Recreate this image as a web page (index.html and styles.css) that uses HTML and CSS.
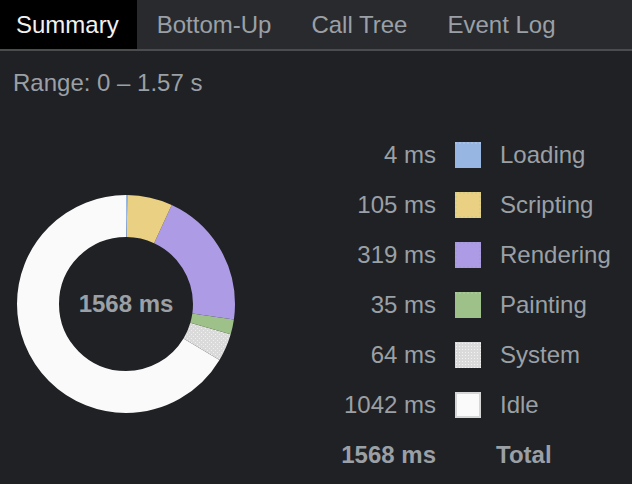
FILE: index.html
```html
<!DOCTYPE html>
<html>
<head>
<meta charset="utf-8">
<link rel="stylesheet" href="styles.css">
</head>
<body>
<div class="tabs">
  <div class="tab active">Summary</div>
  <div class="tab">Bottom-Up</div>
  <div class="tab">Call Tree</div>
  <div class="tab">Event Log</div>
</div>
<div class="range">Range: 0 – 1.57 s</div>
<div class="chart">
  <div class="donut">
    <svg width="218" height="218" viewBox="0 0 218 218">
      <defs>
        <pattern id="dots" width="4" height="4" patternUnits="userSpaceOnUse">
          <rect width="4" height="4" fill="#dadada"/>
          <rect x="0" y="0" width="1" height="1" fill="#f0f0f0"/>
          <rect x="2" y="2" width="1" height="1" fill="#f0f0f0"/>
        </pattern>
      </defs>
      <g transform="rotate(-90 109 109)" fill="none" stroke-width="42">
        <circle cx="109" cy="109" r="88" stroke="#fafafa" stroke-dasharray="367.44 552.92" stroke-dashoffset="-185.48"/>
        <circle cx="109" cy="109" r="88" stroke="url(#dots)" stroke-dasharray="22.57 552.92" stroke-dashoffset="-162.91"/>
        <circle cx="109" cy="109" r="88" stroke="#9dc189" stroke-dasharray="12.34 552.92" stroke-dashoffset="-150.57"/>
        <circle cx="109" cy="109" r="88" stroke="#ad9be6" stroke-dasharray="112.49 552.92" stroke-dashoffset="-38.08"/>
        <circle cx="109" cy="109" r="88" stroke="#ead083" stroke-dasharray="37.03 552.92" stroke-dashoffset="-1.05"/>
        <circle cx="109" cy="109" r="88" stroke="#97b6e2" stroke-dasharray="1.05 552.92" stroke-dashoffset="0"/>
      </g>
    </svg>
    <div class="center">1568 ms</div>
  </div>
  <div class="legend">
    <div class="val">4 ms</div><div class="sw loading"></div><div class="lbl">Loading</div>
    <div class="val">105 ms</div><div class="sw scripting"></div><div class="lbl">Scripting</div>
    <div class="val">319 ms</div><div class="sw rendering"></div><div class="lbl">Rendering</div>
    <div class="val">35 ms</div><div class="sw painting"></div><div class="lbl">Painting</div>
    <div class="val">64 ms</div><div class="sw system"></div><div class="lbl">System</div>
    <div class="val">1042 ms</div><div class="sw idle"></div><div class="lbl">Idle</div>
    <div class="val bold">1568 ms</div><div class="lbl total bold">Total</div>
  </div>
</div>
</body>
</html>
```
FILE: styles.css
```css
html, body {
  margin: 0;
  padding: 0;
  background: #202124;
  font-family: "Liberation Sans", Arial, sans-serif;
  color: #9aa0a6;
  width: 632px;
  height: 484px;
  overflow: hidden;
}
.tabs {
  display: flex;
  height: 49px;
  background: #292a2e;
  border-bottom: 2px solid #4a4c50;
}
.tab {
  font-size: 24px;
  line-height: 49px;
  padding: 0 20px;
  color: #9aa0a6;
}
.tab.active {
  background: #000;
  color: #f1f1f1;
  padding: 0 18px 0 16px;
}
.range {
  font-size: 24px;
  line-height: 32px;
  padding: 16px 0 0 13px;
}
.chart {
  display: flex;
  align-items: center;
  margin-top: 31px;
}
.donut {
  position: relative;
  width: 218px;
  height: 218px;
  margin-left: 17px;
  margin-top: -2px;
}
.donut svg {
  display: block;
}
.center {
  position: absolute;
  inset: 0;
  display: flex;
  align-items: center;
  justify-content: center;
  font-size: 24px;
  font-weight: bold;
  color: #9aa0a6;
}
.legend {
  display: grid;
  grid-template-columns: 201px 26px auto;
  column-gap: 19px;
  grid-auto-rows: 50px;
  align-items: center;
  font-size: 24px;
}
.val {
  text-align: right;
}
.sw {
  width: 26px;
  height: 26px;
  box-sizing: border-box;
}
.loading { background: #97b6e2; border-top: 2px dotted #a8bfe0; }
.scripting { background: #ead083; border: 2px dotted #d8cf86; }
.rendering { background: #ad9be6; border: 2px dotted #a59bd8; }
.painting { background: #9dc189; border-top: 2px dotted #a8c698; }
.system {
  background-color: #dadada;
  background-image: radial-gradient(#f2f2f2 0.7px, transparent 0.9px);
  background-size: 3px 3px;
}
.idle { background: #fafafa; border: 2px solid #d6d6d6; }
.bold { font-weight: bold; }
.total {
  grid-column: 2 / 4;
  padding-left: 41px;
}
```
